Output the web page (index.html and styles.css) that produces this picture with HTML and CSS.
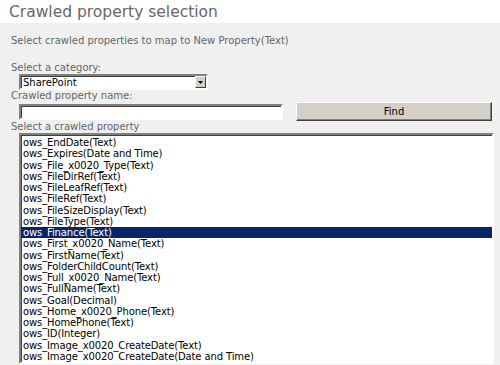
FILE: index.html
```html
<!DOCTYPE html>
<html lang="en">
<head>
    <meta charset="UTF-8">
    <title>Crawled property selection</title>
    <link rel="stylesheet" href="styles.css">
</head>
<body>
    <div class="title">Crawled property selection</div>
    <div class="panel">
        <div class="intro">Select crawled properties to map to New Property(Text)</div>

        <div class="label">Select a category:</div>
        <div class="field">
            <div class="select">
                <span class="select-text">SharePoint</span>
                <span class="select-btn">
                    <svg width="5" height="3" viewBox="0 0 5 3"><path d="M0 0h5L2.5 3z" fill="#000"/></svg>
                </span>
            </div>
        </div>

        <div class="label">Crawled property name:</div>
        <div class="field search-row">
            <div class="textbox"></div>
            <div class="button">Find</div>
        </div>

        <div class="label">Select a crawled property</div>
        <div class="field">
            <div class="listbox">
                <div class="item">ows_EndDate(Text)</div>
                <div class="item">ows_Expires(Date and Time)</div>
                <div class="item">ows_File_x0020_Type(Text)</div>
                <div class="item">ows_FileDirRef(Text)</div>
                <div class="item">ows_FileLeafRef(Text)</div>
                <div class="item">ows_FileRef(Text)</div>
                <div class="item">ows_FileSizeDisplay(Text)</div>
                <div class="item">ows_FileType(Text)</div>
                <div class="item selected">ows_Finance(Text)</div>
                <div class="item">ows_First_x0020_Name(Text)</div>
                <div class="item">ows_FirstName(Text)</div>
                <div class="item">ows_FolderChildCount(Text)</div>
                <div class="item">ows_Full_x0020_Name(Text)</div>
                <div class="item">ows_FullName(Text)</div>
                <div class="item">ows_Goal(Decimal)</div>
                <div class="item">ows_Home_x0020_Phone(Text)</div>
                <div class="item">ows_HomePhone(Text)</div>
                <div class="item">ows_ID(Integer)</div>
                <div class="item">ows_Image_x0020_CreateDate(Text)</div>
                <div class="item">ows_Image_x0020_CreateDate(Date and Time)</div>
            </div>
        </div>
    </div>
</body>
</html>
```

FILE: styles.css
```css
body {
    margin: 0;
    background: #f0f0f0;
    font-family: "DejaVu Sans", Verdana, sans-serif;
    color: #666666;
    height: 365px;
    overflow: hidden;
}

.title {
    background: #ffffff;
    height: 23px;
    line-height: 25px;
    padding-left: 9px;
    font-size: 15.5px;
    color: #676767;
}

.panel {
    padding: 12px 0 0 11px;
}

.intro {
    font-size: 10px;
    line-height: 12px;
    margin-bottom: 15px;
}

.label {
    font-size: 10px;
    line-height: 12px;
}

.field {
    padding-left: 8px;
}

.select {
    width: 185px;
    height: 12px;
    background: #ffffff;
    border: 2px solid;
    border-color: #808080 #ffffff #ffffff #808080;
    box-shadow: inset 1px 1px 0 #404040;
    display: flex;
    align-items: center;
    justify-content: space-between;
    color: #000000;
    font-size: 10px;
}

.select-text {
    padding-left: 2px;
}

.select-btn {
    width: 11px;
    height: 12px;
    background: #d4d0c8;
    border: 1px solid;
    border-color: #ffffff #404040 #404040 #ffffff;
    box-sizing: border-box;
    display: flex;
    align-items: center;
    justify-content: center;
}

.search-row {
    display: flex;
    align-items: center;
    gap: 13px;
    height: 19px;
}

.textbox {
    width: 260px;
    height: 12px;
    background: #ffffff;
    border: 2px solid;
    border-color: #808080 #ffffff #ffffff #808080;
    box-shadow: inset 1px 1px 0 #404040;
}

.button {
    width: 196px;
    height: 19px;
    box-sizing: border-box;
    background: #d4d0c8;
    border: 1px solid;
    border-color: #ffffff #404040 #404040 #ffffff;
    box-shadow: inset -1px -1px 0 #808080;
    color: #000000;
    font-size: 10px;
    text-align: center;
    line-height: 17px;
}

.listbox {
    width: 471px;
    height: 225px;
    background: #ffffff;
    border: 2px solid;
    border-color: #808080 #ffffff #ffffff #808080;
    box-shadow: inset 1px 1px 0 #404040;
    padding-top: 2px;
    color: #000000;
    font-size: 10px;
    letter-spacing: -0.12px;
    overflow: hidden;
}

.item {
    height: 11.25px;
    line-height: 11px;
    padding-left: 2px;
    white-space: nowrap;
}

.item.selected {
    background: #0a246a;
    color: #ffffff;
}
```
